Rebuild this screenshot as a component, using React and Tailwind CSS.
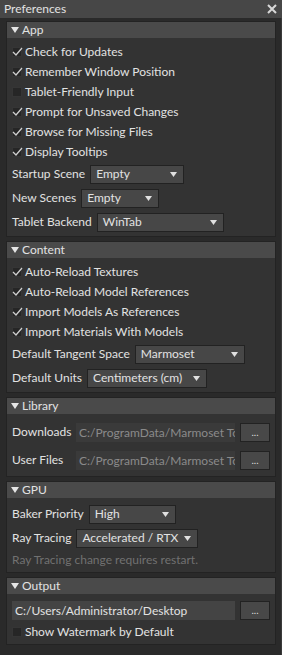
import { useState } from "react";

function Check({ checked, label }) {
  return (
    <div className="flex items-center h-5 pl-[5px]">
      <span className="relative w-[10px] h-[10px] bg-[#262626] border border-[#353535] shrink-0">
        {checked && (
          <svg className="absolute -left-[1px] -top-[2px]" width="11" height="11" viewBox="0 0 11 11">
            <path d="M1 6 L4 9 L10 2" fill="none" stroke="#cfcfcf" strokeWidth="1.3" />
          </svg>
        )}
      </span>
      <span className="ml-[3px] whitespace-nowrap">{label}</span>
    </div>
  );
}

function Dropdown({ label, value, width }) {
  return (
    <div className="flex items-center h-6 pl-[5px]">
      <span className="mr-[5px] whitespace-nowrap">{label}</span>
      <div
        className="flex items-center justify-between h-[19px] bg-[#474747] border border-[#222] pl-[5px] pr-[6px] whitespace-nowrap"
        style={{ width }}
      >
        <span>{value}</span>
        <svg width="7" height="5" viewBox="0 0 7 5" className="shrink-0">
          <path d="M0 0 H7 L3.5 5 Z" fill="#e0e0e0" />
        </svg>
      </div>
    </div>
  );
}

function Browse() {
  return (
    <button className="ml-[5px] w-[30px] h-[19px] shrink-0 bg-[#484848] border border-[#222] text-[10px] leading-none text-[#ddd]">
      ...
    </button>
  );
}

function PathRow({ label, value }) {
  return (
    <div className="flex items-center h-7 pl-[5px]">
      <span className="w-[64px] shrink-0 whitespace-nowrap">{label}</span>
      <div className="flex-1 min-w-0 h-[19px] bg-[#3a3a3a] text-[#8a8a8a] pl-[3px] overflow-hidden whitespace-nowrap leading-[19px]">
        {value}
      </div>
      <Browse />
    </div>
  );
}

function Section({ title, first, children }) {
  const [open, setOpen] = useState(true);
  return (
    <div className={(first ? "mt-[3px]" : "mt-[4px]") + " border border-[#232323] bg-[#333333]"}>
      <div
        className="flex items-center h-[16px] bg-[#4a4a4a] pl-[4px] cursor-pointer"
        onClick={() => setOpen(!open)}
      >
        <svg width="8" height="6" viewBox="0 0 8 6" className="mr-[3px]">
          <path d="M0 0 H8 L4 6 Z" fill="#e6e6e6" />
        </svg>
        <span>{title}</span>
      </div>
      {open && <div className="pt-[4px] pb-[2px] pr-[5px]">{children}</div>}
    </div>
  );
}

export default function App() {
  return (
    <div
      className="w-[282px] h-[655px] bg-[#2a2a2a] text-[12px] text-[#e2e2e2] flex flex-col overflow-hidden"
      style={{ fontFamily: "Lato, sans-serif" }}
    >
      <div className="flex items-center justify-between h-[18px] bg-[#474747] pl-[4px] pr-[5px] shrink-0">
        <span>Preferences</span>
        <svg width="10" height="10" viewBox="0 0 10 10">
          <path d="M1 1 L9 9 M9 1 L1 9" stroke="#d8d8d8" strokeWidth="2" />
        </svg>
      </div>
      <div className="pl-[6px] pr-[5px] border-r border-[#3a3a3a] flex-1">
        <Section title="App" first>
          <Check checked label="Check for Updates" />
          <Check checked label="Remember Window Position" />
          <Check label="Tablet-Friendly Input" />
          <Check checked label="Prompt for Unsaved Changes" />
          <Check checked label="Browse for Missing Files" />
          <Check checked label="Display Tooltips" />
          <Dropdown label="Startup Scene" value="Empty" width={94} />
          <Dropdown label="New Scenes" value="Empty" width={78} />
          <Dropdown label="Tablet Backend" value="WinTab" width={127} />
        </Section>
        <Section title="Content">
          <Check checked label="Auto-Reload Textures" />
          <Check checked label="Auto-Reload Model References" />
          <Check checked label="Import Models As References" />
          <Check checked label="Import Materials With Models" />
          <Dropdown label="Default Tangent Space" value="Marmoset" width={110} />
          <Dropdown label="Default Units" value="Centimeters (cm)" width={120} />
        </Section>
        <Section title="Library">
          <PathRow label="Downloads" value="C:/ProgramData/Marmoset Toolbag" />
          <PathRow label="User Files" value="C:/ProgramData/Marmoset Toolbag" />
        </Section>
        <Section title="GPU">
          <Dropdown label="Baker Priority" value="High" width={87} />
          <Dropdown label="Ray Tracing" value="Accelerated / RTX" width={122} />
          <div className="h-5 pl-[5px] flex items-center text-[#717171] whitespace-nowrap">
            Ray Tracing change requires restart.
          </div>
        </Section>
        <Section title="Output">
          <div className="flex items-center h-6 pl-[5px]">
            <div className="flex-1 h-[19px] bg-[#444] pl-[3px] leading-[19px] whitespace-nowrap overflow-hidden">
              C:/Users/Administrator/Desktop
            </div>
            <Browse />
          </div>
          <Check label="Show Watermark by Default" />
        </Section>
      </div>
    </div>
  );
}
